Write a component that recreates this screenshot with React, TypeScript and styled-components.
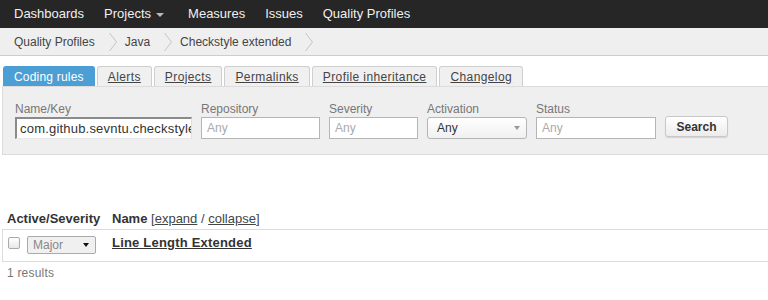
import React from "react";
import styled, { createGlobalStyle } from "styled-components";

const Global = createGlobalStyle`
  html, body { margin: 0; padding: 0; background: #fff; }
  body { font-family: "Liberation Sans", Arial, sans-serif; font-size: 12px; color: #444; }
  * { box-sizing: border-box; }
`;

const TopNav = styled.nav`
  height: 28px;
  background: #262626;
  display: flex;
  align-items: center;
  padding-left: 4px;
`;

const NavItem = styled.a<{ $tight?: boolean }>`
  color: #f0f0f0;
  font-size: 13px;
  padding: ${(p) => (p.$tight ? "0 0 0 10px" : "0 10px")};
  display: flex;
  align-items: center;
  text-decoration: none;
  line-height: 28px;
`;

const Caret = styled.span`
  display: inline-block;
  width: 0;
  height: 0;
  border-left: 4px solid transparent;
  border-right: 4px solid transparent;
  border-top: 4px solid #bbb;
  margin-left: 5px;
  margin-right: 14px;
  margin-top: 1px;
`;

const Crumbs = styled.div`
  height: 28px;
  background: #efefef;
  border-bottom: 1px solid #cdcdcd;
  display: flex;
  align-items: center;
  padding-left: 14px;
`;

const Crumb = styled.span`
  color: #444;
  font-size: 12px;
`;

const Sep = styled.svg`
  margin: 0 8px 0 14px;
  flex: none;
`;

const Content = styled.div`
  padding: 10px 0 0 2px;
`;

const Tabs = styled.div`
  display: flex;
  gap: 2px;
  padding-left: 1px;
  height: 20px;
  align-items: flex-end;
`;

const Tab = styled.a<{ $active?: boolean }>`
  height: 20px;
  padding: 0 10px;
  display: flex;
  align-items: center;
  font-size: 12px;
  border: 1px solid ${(p) => (p.$active ? "#4b9fd5" : "#cfcfcf")};
  border-bottom: none;
  border-radius: 3px 3px 0 0;
  background: ${(p) => (p.$active ? "#4b9fd5" : "#f0f0f0")};
  color: ${(p) => (p.$active ? "#fff" : "#444")};
  text-decoration: ${(p) => (p.$active ? "none" : "underline")};
  letter-spacing: ${(p) => (p.$active ? "0.2px" : "0.4px")};
`;

const Panel = styled.div`
  background: #efefef;
  border: 1px solid #dcdcdc;
  border-right: none;
  padding: 14px 0 15px 12px;
  display: flex;
  gap: 9px;
  align-items: flex-end;
`;

const Field = styled.div`
  display: flex;
  flex-direction: column;
`;

const Label = styled.label`
  color: #777;
  font-size: 12px;
  line-height: 16px;
  height: 16px;
`;

const TextInput = styled.div<{ $w: number; $filled?: boolean }>`
  width: ${(p) => p.$w}px;
  height: 22px;
  background: #fff;
  border: 1px solid #b5b5b5;
  ${(p) =>
    p.$filled
      ? `border-top: 2px solid #8a8a8a; border-left: 2px solid #8a8a8a; border-right: 1px solid #e0e0e0; border-bottom: 1px solid #e8e8e8; color: #333; font-size: 13px; padding-left: 3px; letter-spacing: 0.2px;`
      : `color: #aaa; font-size: 12px; padding-left: 5px;`}
  display: flex;
  align-items: center;
  overflow: hidden;
  white-space: nowrap;
`;

const SelectBox = styled.div<{ $w: number }>`
  width: ${(p) => p.$w}px;
  height: 22px;
  border: 1px solid #b5b5b5;
  border-radius: 3px;
  background: linear-gradient(#fff, #f0f0f0);
  display: flex;
  align-items: center;
  justify-content: space-between;
  padding: 0 6px 0 9px;
  color: #333;
  font-size: 12px;
`;

const SmallTri = styled.span<{ $color: string; $size: number }>`
  width: 0;
  height: 0;
  border-left: ${(p) => p.$size}px solid transparent;
  border-right: ${(p) => p.$size}px solid transparent;
  border-top: ${(p) => p.$size + 1}px solid ${(p) => p.$color};
`;

const Button = styled.button`
  height: 21px;
  width: 63px;
  margin-bottom: 2px;
  border: 1px solid #c8c8c8;
  border-radius: 3px;
  background: linear-gradient(#fff, #ececec);
  box-shadow: 0 1px 1px rgba(0, 0, 0, 0.12);
  font-family: "Liberation Sans", Arial, sans-serif;
  font-weight: bold;
  font-size: 12px;
  color: #333;
  padding: 0;
`;

const Table = styled.div`
  margin-top: 52px;
`;

const HeadRow = styled.div`
  display: flex;
  align-items: center;
  height: 22px;
  padding-left: 5px;
`;

const HeadCell = styled.div<{ $w?: number }>`
  ${(p) => (p.$w ? `width: ${p.$w}px;` : "")}
  font-weight: bold;
  color: #333;
  font-size: 13px;
`;

const Plain = styled.span`
  font-weight: normal;
  color: #444;
  a { color: #444; text-decoration: underline; }
`;

const Row = styled.div`
  display: flex;
  align-items: flex-start;
  height: 33px;
  border: 1px solid #dcdcdc;
  border-right: none;
  padding: 6px 0 0 5px;
`;

const Check = styled.span`
  width: 12px;
  height: 12px;
  margin-top: 1px;
  border: 1px solid #aaa;
  border-radius: 2px;
  background: linear-gradient(#fff, #e8e8e8);
`;

const SevSelect = styled.div`
  width: 69px;
  height: 18px;
  margin-left: 7px;
  border: 1px solid #aaa;
  border-radius: 2px;
  background: #f0f0f0;
  display: flex;
  align-items: center;
  justify-content: space-between;
  padding: 0 6px 0 5px;
  color: #888;
  font-size: 12px;
`;

const RuleName = styled.a`
  margin-left: 16px;
  margin-top: -1px;
  font-weight: bold;
  color: #333;
  font-size: 13px;
  text-decoration: underline;
  letter-spacing: 0.2px;
`;

const Results = styled.div`
  padding: 4px 0 0 5px;
  color: #777;
  font-size: 12px;
  letter-spacing: 0.2px;
`;

const Chevron = () => (
  <Sep width="8" height="20" viewBox="0 0 8 20">
    <polyline points="0.5,1 7.5,10 0.5,19" fill="none" stroke="#c4c4c4" strokeWidth="1" />
  </Sep>
);

export default function App() {
  return (
    <>
      <Global />
      <TopNav>
        <NavItem>Dashboards</NavItem>
        <NavItem $tight>
          Projects
          <Caret />
        </NavItem>
        <NavItem>Measures</NavItem>
        <NavItem>Issues</NavItem>
        <NavItem>Quality Profiles</NavItem>
      </TopNav>
      <Crumbs>
        <Crumb>Quality Profiles</Crumb>
        <Chevron />
        <Crumb>Java</Crumb>
        <Chevron />
        <Crumb>Checkstyle extended</Crumb>
        <Chevron />
      </Crumbs>
      <Content>
        <Tabs>
          <Tab $active>Coding rules</Tab>
          <Tab>Alerts</Tab>
          <Tab>Projects</Tab>
          <Tab>Permalinks</Tab>
          <Tab>Profile inheritance</Tab>
          <Tab>Changelog</Tab>
        </Tabs>
        <Panel>
          <Field>
            <Label>Name/Key</Label>
            <TextInput $w={177} $filled>
              com.github.sevntu.checkstyle
            </TextInput>
          </Field>
          <Field>
            <Label>Repository</Label>
            <TextInput $w={119}>Any</TextInput>
          </Field>
          <Field>
            <Label>Severity</Label>
            <TextInput $w={89}>Any</TextInput>
          </Field>
          <Field>
            <Label>Activation</Label>
            <SelectBox $w={100}>
              Any
              <SmallTri $color="#999" $size={3} />
            </SelectBox>
          </Field>
          <Field>
            <Label>Status</Label>
            <TextInput $w={120}>Any</TextInput>
          </Field>
          <Button>Search</Button>
        </Panel>
        <Table>
          <HeadRow>
            <HeadCell $w={105}>Active/Severity</HeadCell>
            <HeadCell>
              Name{" "}
              <Plain>
                [<a>expand</a> / <a>collapse</a>]
              </Plain>
            </HeadCell>
          </HeadRow>
          <Row>
            <Check />
            <SevSelect>
              Major
              <SmallTri $color="#111" $size={3} />
            </SevSelect>
            <RuleName>Line Length Extended</RuleName>
          </Row>
          <Results>1 results</Results>
        </Table>
      </Content>
    </>
  );
}
